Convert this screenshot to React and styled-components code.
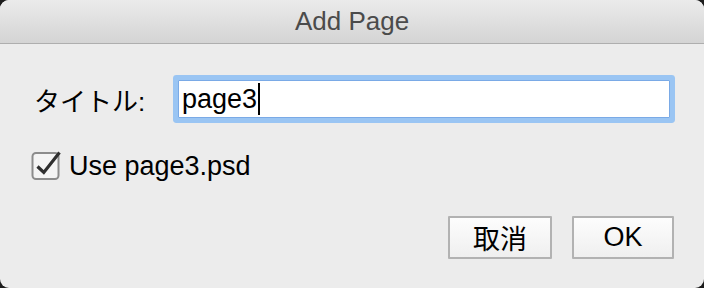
import React from "react";
import styled, { createGlobalStyle } from "styled-components";

const GlobalStyle = createGlobalStyle`
  html, body {
    margin: 0;
    padding: 0;
    background: #1c1c1c;
  }
  body {
    font-family: "Liberation Sans", "Noto Sans CJK JP", sans-serif;
  }
`;

const Window = styled.div`
  width: 704px;
  height: 288px;
  border-radius: 9px;
  overflow: hidden;
  background: #ececec;
  display: flex;
  flex-direction: column;
`;

const TitleBar = styled.div`
  height: 43px;
  flex: none;
  display: flex;
  align-items: center;
  justify-content: center;
  background: linear-gradient(#ebebeb, #d4d4d4);
  border-bottom: 1px solid #aeaeae;
  color: #4b4b4b;
  font-size: 26px;
`;

const Body = styled.div`
  padding: 36px 30px 0 34px;
  display: flex;
  flex-direction: column;
`;

const FieldRow = styled.div`
  display: flex;
  align-items: center;
  height: 38px;
`;

const Label = styled.span`
  width: 144px;
  font-size: 26px;
  color: #000;
`;

const TextField = styled.div`
  box-sizing: border-box;
  width: 492px;
  height: 38px;
  background: #fff;
  border: 1px solid #7aaae6;
  border-radius: 1px;
  box-shadow: 0 0 0 5px #9ac5f3;
  display: flex;
  align-items: center;
  padding-left: 3px;
  font-size: 27px;
  color: #000;
`;

const Caret = styled.span`
  width: 2px;
  height: 32px;
  margin-left: 1px;
  background: #000;
`;

const CheckRow = styled.label`
  display: flex;
  align-items: center;
  gap: 7px;
  margin-top: 32px;
  margin-left: -4px;
  font-size: 27px;
  color: #000;
`;

const Buttons = styled.div`
  display: flex;
  justify-content: flex-end;
  gap: 20px;
  margin-top: 34px;
`;

const Button = styled.button`
  box-sizing: border-box;
  width: ${(p) => p.$w}px;
  height: 43px;
  border: 2px solid #b2b2b2;
  border-radius: 1px;
  background: linear-gradient(#fdfdfd, #efefef);
  font-family: inherit;
  font-size: 27px;
  color: #000;
  padding: 0;
`;

const CheckIcon = () => (
  <svg width="32" height="32" viewBox="0 0 32 32">
    <rect x="2.5" y="3" width="26" height="26" rx="3.5" fill="#f4f4f4" stroke="#8c8c8c" strokeWidth="2" />
    <path d="M7.5 16.5 L13.8 22.5 L29.5 2.5" fill="none" stroke="#2f2f2f" strokeWidth="3.2" strokeLinejoin="miter" />
  </svg>
);

export default function App() {
  return (
    <>
      <GlobalStyle />
      <Window>
        <TitleBar>Add Page</TitleBar>
        <Body>
          <FieldRow>
            <Label>タイトル:</Label>
            <TextField>
              page3
              <Caret />
            </TextField>
          </FieldRow>
          <CheckRow>
            <CheckIcon />
            Use page3.psd
          </CheckRow>
          <Buttons>
            <Button $w={104}>取消</Button>
            <Button $w={102}>OK</Button>
          </Buttons>
        </Body>
      </Window>
    </>
  );
}
